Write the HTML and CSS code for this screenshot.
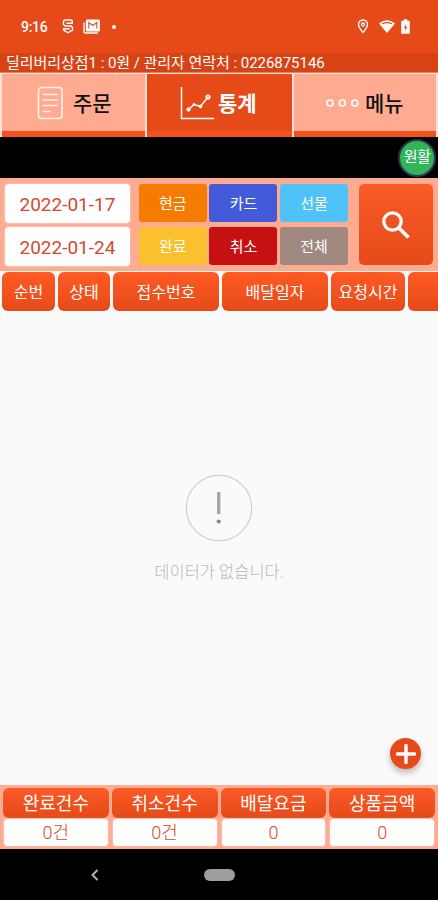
FILE: index.html
```html
<!DOCTYPE html>
<html lang="ko">
<head>
<meta charset="utf-8">
<title>통계</title>
<link rel="stylesheet" href="styles.css">
</head>
<body>
<div class="app">
  <header class="status">
    <span class="clock">9:16</span>
    <svg class="ic-s" width="12" height="15" viewBox="0 0 12 15" fill="none" stroke="#fff" stroke-width="1.4"><path d="M10.300 4.800V2L9 1H3L1.500 2.200V5.500L3 7H9.200L10.500 8.500V11L6 13.800L1.500 11V9.300M4.300 4.300H10.300M1.500 9.800H7.700"/></svg>
    <svg class="ic-news" width="18" height="15" viewBox="0 0 18 15"><path d="M4 .5H15.500Q17 .5 17 2V11Q17 12.500 15.500 12.500H4Q2.800 12.500 2.800 11V2Q2.800 .5 4 .5Z" fill="#fff"/><path d="M1 3.500V12.500Q1 14 2.500 14H15" fill="none" stroke="#fff" stroke-width="1.400"/><path d="M5.800 9.500V3.500L9.800 6.500L13.800 3.500V9.500" fill="none" stroke="#e64a19" stroke-width="1.100"/></svg>
    <i class="dot"></i>
    <div class="status-right">
      <svg width="12" height="15" viewBox="0 0 12 15" fill="none" stroke="#fff"><path d="M6 13.500C3 10 1.500 8 1.500 5.500A4.500 4.500 0 0 1 10.500 5.500C10.500 8 9 10 6 13.500Z" stroke-width="1.400"/><circle cx="6" cy="5.500" r="1.500" stroke-width="1.300"/></svg>
      <svg class="wifi" width="18" height="15" viewBox="0 0 18 15"><path d="M1 4.500Q9-2 17 4.500L9 14Z" fill="#fff"/><path d="M4 4.800Q9 2.400 14 4.800" fill="none" stroke="#e64a19" stroke-width="1.100"/></svg>
      <svg class="battery" width="9" height="15" viewBox="0 0 9 15"><path d="M1 1.800H2.800V.3H6.200V1.800H8Q8.800 1.800 8.800 2.600V14Q8.800 14.800 8 14.800H1Q.2 14.800 .2 14V2.600Q.2 1.800 1 1.800Z" fill="#fff"/><path d="M5 5L3 9H4.300V12L6.200 8H5Z" fill="#e64a19"/></svg>
    </div>
  </header>
  <div class="shop">딜리버리상점1 : 0원 / 관리자 연락처 : 0226875146</div>
  <nav class="tabs">
    <div class="tab">
      <svg width="27" height="34" viewBox="0 0 27 34" fill="none" stroke="#fff0eb" stroke-width="1.700" stroke-linecap="round"><rect x="1.500" y="1.500" width="23.500" height="31" rx="3"/><path d="M6.500 8.500H20M6.500 14H20M6.500 19.500H20M6.500 25.500H13"/></svg>
      <span class="tab-name order">주문</span>
    </div>
    <div class="tab active">
      <svg width="34" height="34" viewBox="0 0 34 34" fill="none" stroke="#fff" stroke-width="1.500"><path d="M1.500 1V32.500H34M9 23L14 18.500L20.500 20.500L28 11"/><g fill="#fff" stroke-width="1"><circle cx="8.500" cy="23.500" r="1.700"/><circle cx="14" cy="18.500" r="1"/><circle cx="20.500" cy="20.500" r="1.400"/></g><circle cx="28" cy="11" r="1.800" fill="#ffab91"/></svg>
      <span class="tab-name stats">통계</span>
    </div>
    <div class="tab">
      <svg width="34" height="10" viewBox="0 0 34 10" fill="none" stroke="#fff" stroke-width="1.600"><circle cx="5" cy="5" r="3"/><circle cx="17.300" cy="5" r="3"/><circle cx="29.800" cy="5" r="3"/></svg>
      <span class="tab-name menu">메뉴</span>
    </div>
  </nav>
  <div class="notice"><span class="badge">원활</span></div>
  <section class="filter">
    <div class="dates"><div class="date">2022-01-17</div><div class="date">2022-01-24</div></div>
    <div class="kinds">
      <div class="kind cash">현금</div><div class="kind card">카드</div><div class="kind gift">선물</div>
      <div class="kind done">완료</div><div class="kind cancel">취소</div><div class="kind all">전체</div>
    </div>
    <div class="search"><svg width="30" height="30" viewBox="0 0 30 30" fill="none" stroke="#fff"><circle cx="11.500" cy="11.500" r="8.700" stroke-width="3.300"/><path d="M18 18L27.500 27.500" stroke-width="3.800"/></svg></div>
  </section>
  <div class="columns">
    <div class="col">순번</div><div class="col">상태</div><div class="col">접수번호</div><div class="col">배달일자</div><div class="col">요청시간</div><div class="col"></div>
  </div>
  <main class="empty">
    <svg width="68" height="68" viewBox="0 0 68 68"><circle cx="34" cy="34" r="32.700" fill="none" stroke="#d0d0d0" stroke-width="1.200"/><path d="M33.700 18V40" stroke="#a6a6a6" stroke-width="3.400"/><circle cx="33.700" cy="47.500" r="2.100" fill="#888"/></svg>
    <p>데이터가 없습니다.</p>
    <div class="add"><svg width="20" height="20" viewBox="0 0 20 20"><path d="M10 1.500V18.500M1.500 10H18.500" stroke="#fff" stroke-width="3.400" stroke-linecap="round"/></svg></div>
  </main>
  <footer class="totals">
    <div class="label">완료건수</div><div class="label">취소건수</div><div class="label">배달요금</div><div class="label">상품금액</div>
    <div class="value">0건</div><div class="value">0건</div><div class="value">0</div><div class="value">0</div>
  </footer>
  <div class="sysnav">
    <svg width="8" height="12" viewBox="0 0 8 12" fill="none" stroke="#b0b0b0" stroke-width="2"><path d="M6.500 1L1.500 6L6.500 11"/></svg>
    <i class="home"></i>
  </div>
</div>
</body>
</html>
```
FILE: styles.css
```css
* { box-sizing: border-box; }
body { margin: 0; font-family: Roboto, "Noto Sans CJK KR", sans-serif; }
.app { width: 438px; height: 900px; display: flex; flex-direction: column; overflow: hidden; background: #fafafa; white-space: nowrap; }
svg { display: block; flex: none; }

.status { height: 53px; flex: none; display: flex; align-items: center; padding: 0 28px 0 21px; background: #e64a19; color: #fff; }
.clock { width: 41px; font-size: 14px; font-weight: 500; letter-spacing: -0.3px; }
.ic-news { margin-left: 9px; }
.dot { width: 4px; height: 4px; border-radius: 50%; background: #fff; margin-left: 11px; }
.status-right { margin-left: auto; display: flex; align-items: center; }
.wifi { margin-left: 9px; }
.battery { margin-left: 5px; }

.shop { height: 19px; flex: none; padding-left: 6px; background: #d84315; color: #fff; font-size: 15px; line-height: 21px; letter-spacing: -0.04px; }

.tabs { height: 65px; flex: none; display: grid; grid-template-columns: 143px 145px 142px; column-gap: 2px; padding: 1px 2px 0; background: #ffe0d6; border-top: 1px solid #e9815f; }
.tab { display: flex; align-items: center; background: #ffab91; border-bottom: 6px solid #f4511e; color: #111; }
.tab svg { margin-left: 35px; }
.tab.active { background: #e64a19; color: #fff; }
.tab.active svg { margin-left: 33px; }
.tab:last-child svg { margin-left: 31px; }
.tab-name { font-size: 21px; font-weight: 500; line-height: 24px; margin-top: 3px; }
.order { margin-left: 9px; }
.stats { margin-left: 4px; font-weight: 700; }
.menu { margin-left: 6px; }

.notice { height: 41px; flex: none; display: flex; justify-content: flex-end; align-items: center; background: #000; padding-right: 2px; }
.badge { width: 38px; height: 38px; border: 2px solid #2a3654; border-radius: 50%; background: #2fb457; color: #fff; font-size: 15px; line-height: 33px; text-align: center; letter-spacing: -0.5px; }

.filter { height: 93px; flex: none; display: flex; padding: 6px 5px 0; background: #ffab91; }
.dates { width: 125px; display: grid; grid-template-rows: 39px 39px; row-gap: 4px; }
.date { border-radius: 4px; background: #fff; color: #d34a2c; font-size: 19px; line-height: 41px; text-align: center; box-shadow: 0 0 2px #ffe3da; }
.kinds { margin-left: 9px; display: grid; grid-template-columns: repeat(3, 68px); grid-template-rows: 38px 38px; gap: 5px 2.600px; }
.kind { border-radius: 3px; color: #fff; font-size: 15px; line-height: 40px; text-align: center; }
.cash { background: #f57c00; }
.card { background: #435bd9; }
.gift { background: #4fc3f7; }
.done { background: #fbc02d; }
.cancel { background: #c51111; }
.all { background: #a1887f; }
.search { width: 74px; height: 81px; margin-left: 11px; display: grid; place-items: center; border-radius: 5px; background: linear-gradient(#f95b29, #e64a19); }

.columns { height: 41px; flex: none; display: grid; grid-template-columns: 53px 52px 106px 106px 74px 106px; grid-template-rows: 39px; column-gap: 3px; padding: 1px 2px 0; }
.col { border-radius: 6px; background: linear-gradient(#ff5b24, #e64a19); color: #fff; font-size: 16px; line-height: 41px; text-align: center; }

.empty { flex: 1; position: relative; display: flex; flex-direction: column; align-items: center; padding-top: 162px; }
.empty p { margin: 19px 0 0; color: #b8b8b8; font-size: 16.500px; line-height: 24px; font-weight: 300; }
.add { position: absolute; left: 390px; bottom: 16px; width: 31px; height: 31px; display: grid; place-items: center; border-radius: 50%; background: #e64a19; box-shadow: 0 4px 6px rgba(0, 0, 0, 0.25); }

.totals { height: 64px; flex: none; display: grid; grid-template-columns: repeat(4, 1fr); grid-template-rows: 30px 27px; gap: 1px 3px; padding: 2.500px 3px 0; background: #ffab91; }
.label { border-radius: 6px; background: linear-gradient(#fb5a26, #e64a19); color: #fff; font-size: 18px; line-height: 31px; text-align: center; }
.value { border-radius: 4px; background: #fff; color: #d34a2c; font-size: 18px; line-height: 28px; text-align: center; font-weight: 300; box-shadow: 0 0 2px #ffe3da; margin: 0 1px; }

.sysnav { height: 51px; flex: none; display: flex; align-items: center; padding-left: 91px; background: #000; }
.home { width: 31px; height: 12px; margin-left: 105px; border-radius: 6px; background: #9e9e9e; }
```
